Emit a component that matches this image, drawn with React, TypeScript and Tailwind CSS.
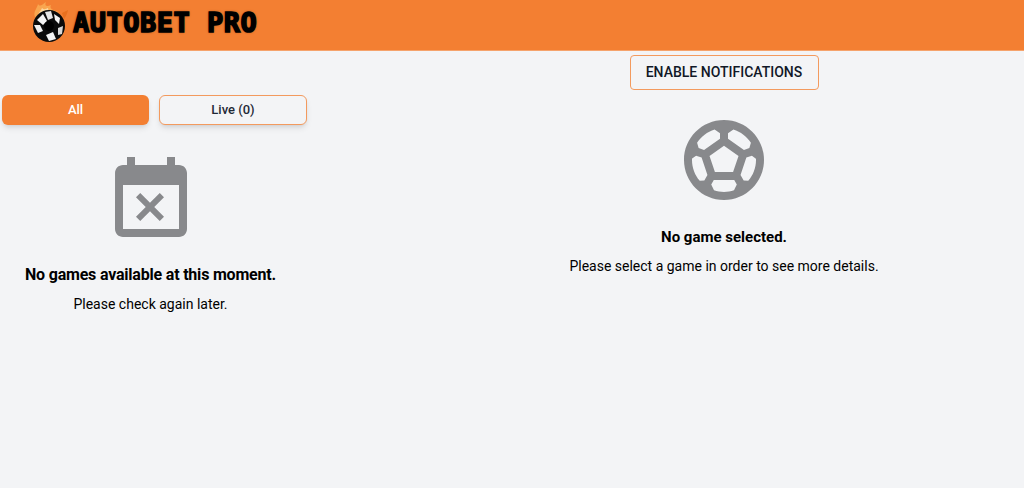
// App.tsx
const roboto = "font-['Roboto',sans-serif]";

function Logo() {
  return (
    <div className="flex items-center ml-[29px] h-[44px]">
      <svg width="40" height="42" viewBox="0 0 40 42" className="shrink-0">
        {/* flame */}
        <path d="M6 16 C4 10 8 8 9 3 C11 6 13 4 17 1 C15 5 18 6 22 4 C20 8 24 9 30 11 L14 18 Z" fill="#f9a64f" />
        <path d="M10 15 C9 11 12 10 13 7 C15 9 17 8 19 7 L20 12 Z" fill="#fcd9a0" />
        <path d="M33 12 L39 9 C38 13 37 15 35 18 Z" fill="#e8701f" />
        {/* ball */}
        <circle cx="20" cy="25" r="16" fill="#0b0b0b" />
        <path d="M8 19 L14 13 L18 20 L14 24 Z" fill="#f4f4f4" />
        <path d="M16 11 L22 10 L24 17 L19 19 Z" fill="#e6e6e6" />
        <path d="M25 13 L31 17 L30 23 L26 19 Z" fill="#f4f4f4" />
        <path d="M5 24 L11 24 L14 30 L9 32 Z" fill="#f0f0f0" />
        <path d="M17 34 L24 31 L27 38 L20 40 Z" fill="#f4f4f4" />
        <path d="M29 27 L34 25 L33 33 L29 34 Z" fill="#d8d8d8" />
        <circle cx="20" cy="25" r="5" fill="#000" />
      </svg>
      <span
        className="ml-[4px] font-['DejaVu_Sans_Mono',monospace] font-bold text-[27px] leading-none tracking-[0.5px] text-black whitespace-nowrap [-webkit-text-stroke:1.5px_#000] [text-shadow:0_0_2px_#a8521a,0_0_3px_#a8521a]"
      >
        AUTOBET PRO
      </span>
    </div>
  );
}

function EventBusyIcon() {
  return (
    <svg width="96" height="96" viewBox="0 0 24 24" fill="#88898c">
      <path d="M9.31 17l2.44-2.44L14.19 17l1.06-1.06-2.44-2.44 2.44-2.44L14.19 10l-2.44 2.44L9.31 10l-1.06 1.06 2.44 2.44-2.44 2.44L9.31 17zM19 3h-1V1h-2v2H8V1H6v2H5c-1.11 0-1.99.9-1.99 2L3 19c0 1.1.89 2 2 2h14c1.1 0 2-.9 2-2V5c0-1.1-.9-2-2-2zm0 16H5V8h14v11z" />
    </svg>
  );
}

function SoccerIcon() {
  return (
    <svg width="96" height="96" viewBox="0 0 24 24" fill="#88898c">
      <path d="M12 2C6.48 2 2 6.48 2 12c0 5.52 4.48 10 10 10s10-4.48 10-10C22 6.48 17.52 2 12 2zM13 5.3l1.35-.95c1.82.56 3.37 1.76 4.38 3.34l-.39 1.34-1.35.46L13 6.7V5.3zM9.65 4.35L11 5.3v1.4L7.01 9.49 5.66 9.03 5.27 7.69C6.28 6.12 7.83 4.92 9.65 4.35zM7.08 17.11l-1.14.1C4.73 15.81 4 13.99 4 12c0-.12.01-.23.02-.35l1-.73L6.4 11.4l1.46 4.34L7.08 17.11zM14.5 19.59C13.71 19.85 12.87 20 12 20s-1.71-.15-2.5-.41l-.69-1.49L9.45 17h5.11l.64 1.11L14.5 19.59zM14.27 15H9.73l-1.35-4.02L12 8.44l3.63 2.54L14.27 15zM18.06 17.21l-1.14-.1-.79-1.37 1.46-4.34 1.39-.47 1 .73C19.99 11.77 20 11.88 20 12 20 13.99 19.27 15.81 18.06 17.21z" />
    </svg>
  );
}

export default function App() {
  return (
    <div className={`${roboto} min-h-[488px] bg-[#f3f4f6] text-black overflow-hidden`}>
      <header className="h-[51px] bg-[#f37f32] border-b border-[#f5a36c] flex items-start">
        <Logo />
      </header>

      <main className="flex justify-between">
        {/* Left: games list */}
        <section className="w-[308px] pt-[44px] pl-[2px] shrink-0">
          <div className="flex gap-[10px]">
            <button className="w-[147px] h-[30px] rounded-[6px] bg-[#f37f32] text-white text-[13px] font-medium shadow-md">
              All
            </button>
            <button className="w-[148px] h-[30px] rounded-[6px] bg-[#f3f4f6] border border-[#f39a5e] text-[#1f2937] text-[13px] font-medium shadow-md">
              Live (0)
            </button>
          </div>
          <div className="flex flex-col items-center pr-[9px] pt-[28px]">
            <EventBusyIcon />
            <p className="mt-[14px] text-[16px] leading-[24px] font-bold tracking-[-0.2px]">
              No games available at this moment.
            </p>
            <p className="mt-[5px] text-[14px] leading-[24px]">Please check again later.</p>
          </div>
        </section>

        {/* Right: game details */}
        <section className="w-[600px] flex flex-col items-center pt-[4px]">
          <button className="w-[189px] h-[35px] rounded-[4px] border border-[#f39a5e] text-[14px] font-medium text-[#111827]">
            ENABLE NOTIFICATIONS
          </button>
          <div className="mt-[22px]">
            <SoccerIcon />
          </div>
          <p className="mt-[17px] text-[15px] leading-[24px] font-bold">No game selected.</p>
          <p className="mt-[5px] text-[14px] leading-[24px]">
            Please select a game in order to see more details.
          </p>
        </section>
      </main>
    </div>
  );
}
